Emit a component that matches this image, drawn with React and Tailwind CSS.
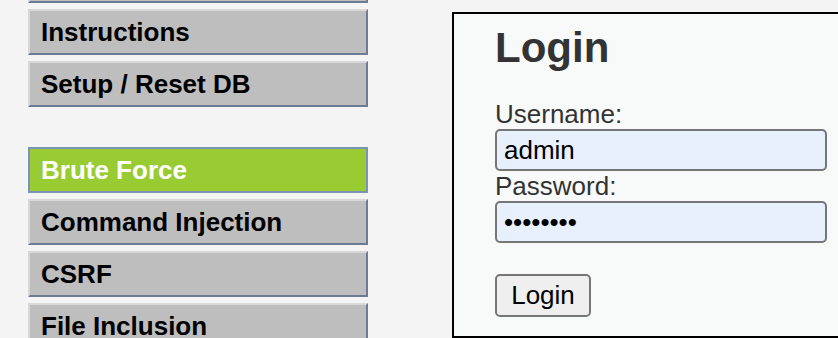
import React from 'react';

const menuTop = [
  { label: '', selected: false },
  { label: 'Instructions', selected: false },
  { label: 'Setup / Reset DB', selected: false },
];

const menuVulns = [
  { label: 'Brute Force', selected: true },
  { label: 'Command Injection', selected: false },
  { label: 'CSRF', selected: false },
  { label: 'File Inclusion', selected: false },
];

function MenuItem({ label, selected }) {
  return (
    <div
      className={`h-[46px] flex items-center pl-[11px] border-2 text-[26px] font-bold leading-[28px] ${
        selected
          ? 'bg-[#99cc33] border-[#7b93b6] text-white'
          : 'bg-[#bebebe] border-t-[#d8d8d8] border-l-[#d8d8d8] border-b-[#6d7b95] border-r-[#6d7b95] text-black'
      }`}
    >
      {label}
    </div>
  );
}

export default function App() {
  return (
    <div
      className="w-[838px] h-[338px] overflow-hidden bg-[#f4f4f4] flex"
      style={{ fontFamily: '"Liberation Sans", Arial, sans-serif' }}
    >
      <div className="w-[340px] ml-[28px] -mt-[43px] flex flex-col shrink-0">
        <div className="flex flex-col gap-[6px]">
          {menuTop.map((m, i) => (
            <MenuItem key={i} {...m} />
          ))}
        </div>
        <div className="flex flex-col gap-[6px] mt-[40px]">
          {menuVulns.map((m, i) => (
            <MenuItem key={i} {...m} />
          ))}
        </div>
      </div>

      <div className="ml-[84px] mt-[12px] w-[420px] shrink-0 h-[326px] border-2 border-black bg-[#f8f9f9] pl-[41px] pt-[13px] text-[#333]">
        <h1 className="text-[42px] leading-[42px] font-bold mb-[31px]">Login</h1>
        <div className="text-[26px] leading-[29px]">Username:</div>
        <input
          readOnly
          value="admin"
          className="block w-[332px] h-[42px] border-2 border-[#767676] rounded-[5px] bg-[#e8f0fe] px-[7px] text-[26px] text-black outline-none"
          style={{ fontFamily: '"Liberation Sans", Arial, sans-serif' }}
        />
        <div className="text-[26px] leading-[30px]">Password:</div>
        <input
          readOnly
          type="password"
          value="password"
          className="block w-[332px] h-[42px] border-2 border-[#767676] rounded-[5px] bg-[#e8f0fe] px-[7px] text-[26px] text-black outline-none"
          style={{ fontFamily: '"Liberation Sans", Arial, sans-serif' }}
        />
        <button className="mt-[31px] w-[96px] h-[43px] border-2 border-[#767676] rounded-[5px] bg-[#efefef] text-[26px] text-black">
          Login
        </button>
      </div>
    </div>
  );
}
